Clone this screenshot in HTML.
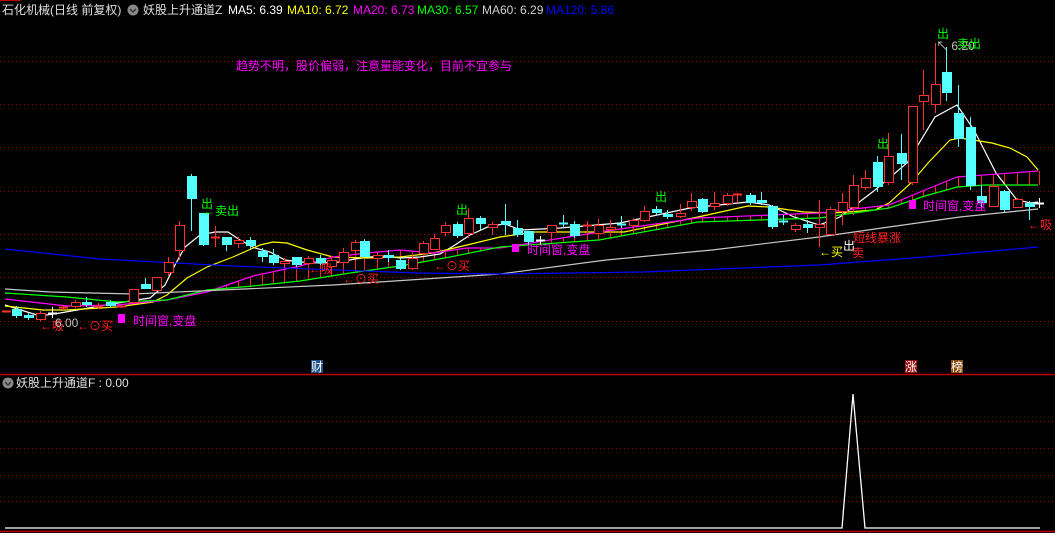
<!DOCTYPE html>
<html><head><meta charset="utf-8">
<style>
html,body{margin:0;padding:0;background:#000;width:1055px;height:533px;overflow:hidden}
svg{display:block}
text{font-family:"Liberation Sans","Noto Sans CJK SC",sans-serif}
</style></head>
<body>
<svg id="s" width="1055" height="533" xmlns="http://www.w3.org/2000/svg">
<g id="grid"></g>
<g id="fill"></g>
<g id="ma" fill="none" stroke-width="1.2"></g>
<g id="cd"></g>
<line x1="0" y1="374.5" x2="1055" y2="374.5" stroke="#c00000" stroke-width="1.5"/>
<line x1="0" y1="531.5" x2="1055" y2="531.5" stroke="#c00000" stroke-width="1.5"/>
<line x1="0" y1="0.5" x2="20" y2="0.5" stroke="#c00000"/>
<polyline points="5,528 842,528 853,394 865,528 1040,528" fill="none" stroke="#fff" stroke-width="1.3"/>
<g font-size="12">
<text x="2" y="14" fill="#e0e0e0">石化机械(日线 前复权)</text>
<circle cx="133" cy="10" r="5.5" fill="#888"/><path d="M130 9 L133 12 L136 9" stroke="#333" fill="none" stroke-width="1.3"/>
<text x="143" y="14" fill="#e0e0e0">妖股上升通道Z</text>
<text x="228" y="14" fill="#fff">MA5: 6.39</text>
<text x="287" y="14" fill="#ffff00">MA10: 6.72</text>
<text x="353" y="14" fill="#ff00ff">MA20: 6.73</text>
<text x="417" y="14" fill="#00ff00">MA30: 6.57</text>
<text x="482" y="14" fill="#d0d0d0">MA60: 6.29</text>
<text x="546" y="14" fill="#0000ff">MA120: 5.86</text>
<text x="236" y="70" fill="#ff00ff">趋势不明，股价偏弱，注意量能变化，目前不宜参与</text>
<text x="201" y="208" fill="#00ff00">出</text>
<text x="203" y="215" fill="#00ff00">←卖出</text>
<rect x="118" y="314" width="7" height="9" fill="#ff00ff"/>
<text x="133" y="325" fill="#ff00ff">时间窗,变盘</text>
<text x="40" y="330" fill="#ff2020">←吸</text>
<text x="55" y="327" fill="#c0c0c0">6.00</text>
<text x="77" y="330" fill="#ff2020">←⊙买</text>
<text x="309" y="273" fill="#ff2020">←吸</text>
<text x="343" y="283" fill="#ff2020">←⊙买</text>
<text x="434" y="270" fill="#ff2020">←⊙买</text>
<text x="456" y="214" fill="#00ff00">出</text>
<text x="655" y="201" fill="#00ff00">出</text>
<rect x="512" y="244" width="7" height="8" fill="#ff00ff"/>
<text x="527" y="254" fill="#ff00ff">时间窗,变盘</text>
<text x="877" y="148" fill="#00ff00">出</text>
<text x="937" y="38" fill="#00ff00">出</text>
<text x="936" y="50" fill="#c0c0c0">↖ 6.20</text>
<text x="957" y="48" fill="#00ff00">卖出</text>
<rect x="909" y="200" width="7" height="9" fill="#ff00ff"/>
<text x="923" y="210" fill="#ff00ff">时间窗,变盘</text>
<text x="853" y="242" fill="#ff2020">短线暴涨</text>
<text x="819" y="256" fill="#ffff00">←买</text>
<text x="843" y="250" fill="#fff">出</text>
<text x="852" y="257" fill="#ff2020">卖</text>
<text x="1028" y="229" fill="#ff2020">←吸</text>
<rect x="311" y="360" width="12" height="13" fill="#1c4f8a"/><text x="311" y="371" fill="#fff">财</text>
<rect x="905" y="360" width="12" height="13" fill="#9a0c0c"/><text x="905" y="371" fill="#fff">涨</text>
<rect x="951" y="360" width="12" height="13" fill="#8a4a10"/><text x="951" y="371" fill="#fff">榜</text>
<circle cx="8" cy="383" r="5.5" fill="#888"/><path d="M5 382 L8 385 L11 382" stroke="#333" fill="none" stroke-width="1.3"/>
<text x="16" y="387" fill="#e0e0e0">妖股上升通道F : 0.00</text>
</g>
</svg>
<script>
var NS="http://www.w3.org/2000/svg";
function el(p,t,a){var e=document.createElementNS(NS,t);for(var k in a)e.setAttribute(k,a[k]);document.getElementById(p).appendChild(e);return e;}
[61,104,147,191,234,277,321,421,448,475,501].forEach(function(y){el("grid","line",{x1:0,x2:1055,y1:y+.5,y2:y+.5,stroke:"#a00000","stroke-dasharray":"1 3"});});
var M={
w:[[5,305],[40,316],[60,313],[100,306],[130,301],[150,298],[165,285],[175,265],[185,247],[200,235],[215,232],[228,232],[240,240],[255,248],[270,252],[285,260],[300,262],[320,263],[340,262],[355,259],[370,257],[385,256],[400,258],[420,257],[440,254],[455,245],[470,235],[490,226],[505,224],[521,230],[560,228],[620,223],[690,208],[748,202],[769,205],[794,217],[819,225],[840,217],[875,190],[907,163],[935,117],[957,105],[974,130],[996,173],[1017,200],[1031,203],[1038,202]],
y:[[5,306],[43,310],[67,310],[117,307],[153,302],[167,295],[187,278],[207,267],[233,257],[260,245],[273,242],[287,243],[307,250],[333,257],[367,258],[400,257],[433,253],[467,245],[500,237],[535,232],[624,232],[698,217],[748,206],[769,207],[804,212],[833,213],[875,210],[889,203],[911,183],[928,163],[950,140],[960,138],[992,143],[1010,148],[1027,157],[1038,170]],
m:[[5,299],[67,306],[117,305],[167,300],[207,292],[253,276],[300,266],[333,257],[367,253],[400,250],[433,253],[467,248],[500,248],[599,232],[698,218],[819,213],[889,205],[925,190],[957,177],[1038,171]],
g:[[5,293],[67,297],[117,302],[167,300],[207,290],[253,286],[300,281],[350,273],[400,266],[450,257],[500,247],[599,240],[698,222],[819,218],[889,208],[925,196],[957,187],[985,185],[1038,185]],
a:[[5,289],[50,292],[133,294],[333,285],[500,274],[606,260],[712,250],[819,237],[889,227],[960,217],[1038,209]],
b:[[5,249],[100,259],[233,266],[417,273],[500,274],[642,272],[819,265],[925,257],[1038,247]]};
function at(L,x){for(var i=1;i<L.length;i++){if(x<=L[i][0]){var a=L[i-1],b=L[i];return a[1]+(b[1]-a[1])*(x-a[0])/(b[0]-a[0]);}}return L[L.length-1][1];}
var C=[[6,311,311,311,311,'r'],[16,309,316,306,318,'c'],[28,315,318,313,320,'c'],[40,313,319,311,321,'r'],[52,313,313,307,318,'w'],[63,307,308,305,310,'r'],[75,302,306,300,308,'r'],[86,302,305,297,307,'c'],[98,306,307,303,309,'r'],[110,302,306,300,308,'c'],[121,306,307,305,308,'r'],[133,289,302,289,302,'r'],[145,284,289,278,289,'c'],[156,277,290,277,290,'r'],[168,262,272,257,276,'r'],[179,225,250,221,260,'r'],[191,176,199,174,231,'c'],[203,213,245,213,246,'c'],[215,237,238,226,247,'r'],[226,237,245,237,251,'c'],[238,240,243,237,248,'r'],[250,240,246,237,250,'c'],[262,251,257,248,262,'c'],[273,255,263,249,265,'c'],[284,261,263,258,268,'r'],[296,257,265,257,267,'c'],[308,258,263,256,266,'r'],[320,258,263,255,265,'c'],[331,260,266,256,272,'r'],[343,252,262,248,266,'r'],[355,242,250,240,254,'r'],[364,241,257,239,257,'c'],[377,255,258,252,262,'r'],[388,255,258,250,262,'c'],[400,260,269,258,270,'c'],[412,258,268,255,270,'r'],[423,243,253,241,256,'r'],[434,238,249,234,250,'r'],[445,225,232,222,236,'r'],[457,224,236,222,238,'c'],[468,218,233,208,238,'r'],[480,218,224,216,230,'c'],[492,224,227,222,235,'r'],
[505,221,225,204,235,'c'],[517,228,235,220,237,'c'],[528,231,242,231,245,'c'],[540,240,240,236,245,'w'],[551,225,232,225,240,'r'],[563,223,223,215,228,'c'],[574,224,236,221,238,'c'],[587,225,225,221,236,'r'],[598,225,233,219,235,'r'],[610,227,229,220,233,'r'],[621,224,224,216,228,'c'],[633,220,225,218,233,'r'],[644,211,220,206,222,'r'],[656,209,213,206,215,'c'],[667,214,217,210,219,'c'],[680,213,216,204,218,'r'],[691,201,207,193,211,'r'],[702,199,212,198,213,'c'],[714,203,206,192,210,'r'],[727,195,203,193,206,'r'],[737,194,195,193,203,'r'],[750,195,203,193,205,'c'],[761,200,203,192,205,'c'],[772,206,227,205,229,'c'],[783,221,221,215,225,'c'],[795,225,229,223,232,'r'],[807,224,228,220,233,'c'],[819,224,227,200,247,'r'],[830,209,234,207,234,'r'],[842,202,211,193,225,'r'],[853,185,207,175,215,'r'],[865,178,187,170,190,'r'],[877,162,187,156,192,'c'],[888,156,182,133,185,'r'],[901,153,164,134,180,'c'],[912,106,182,106,185,'r'],[923,95,101,70,130,'r'],[935,84,104,43,113,'r'],[946,72,93,47,101,'c'],[958,113,139,85,147,'c'],[970,127,186,117,190,'c'],[981,196,203,185,210,'c'],[993,186,206,180,206,'r'],[1004,191,210,190,213,'c'],[1017,199,207,198,207,'r'],[1029,203,207,201,220,'c'],[1039,203,203,198,208,'w']];
C.forEach(function(c){var x=c[0];if(x<185)return;var m=at(M.m,x),g=at(M.g,x);if(g-m>2)el("fill","line",{x1:x+.5,x2:x+.5,y1:m,y2:g,stroke:"#ff2020"});});
var col={w:"#ffffff",y:"#ffff00",m:"#ff00ff",g:"#00ff00",a:"#c8c8c8",b:"#0000ff"};
for(var k in M)el("ma","polyline",{points:M[k].map(function(p){return p.join(",")}).join(" "),stroke:col[k]});
el("ma","line",{x1:912.5,x2:912.5,y1:106,y2:182,stroke:"#ffff00"});
C.forEach(function(c){var x=c[0],t=c[1],b=c[2],h=c[3],l=c[4],k=c[5];
var s=k=='r'?"#ff3030":k=='c'?"#54ffff":"#ffffff";
el("cd","line",{x1:x+.5,x2:x+.5,y1:h,y2:l,stroke:s});
if(b-t<1.5){el("cd","line",{x1:x-4,x2:x+5,y1:t+.5,y2:t+.5,stroke:s,"stroke-width":2});return;}
if(k=='r')el("cd","rect",{x:x-3.5,y:t+.5,width:9,height:b-t,fill:"#000",stroke:s});
else el("cd","rect",{x:x-4,y:t,width:10,height:b-t,fill:s});});
</script>
</body></html>
